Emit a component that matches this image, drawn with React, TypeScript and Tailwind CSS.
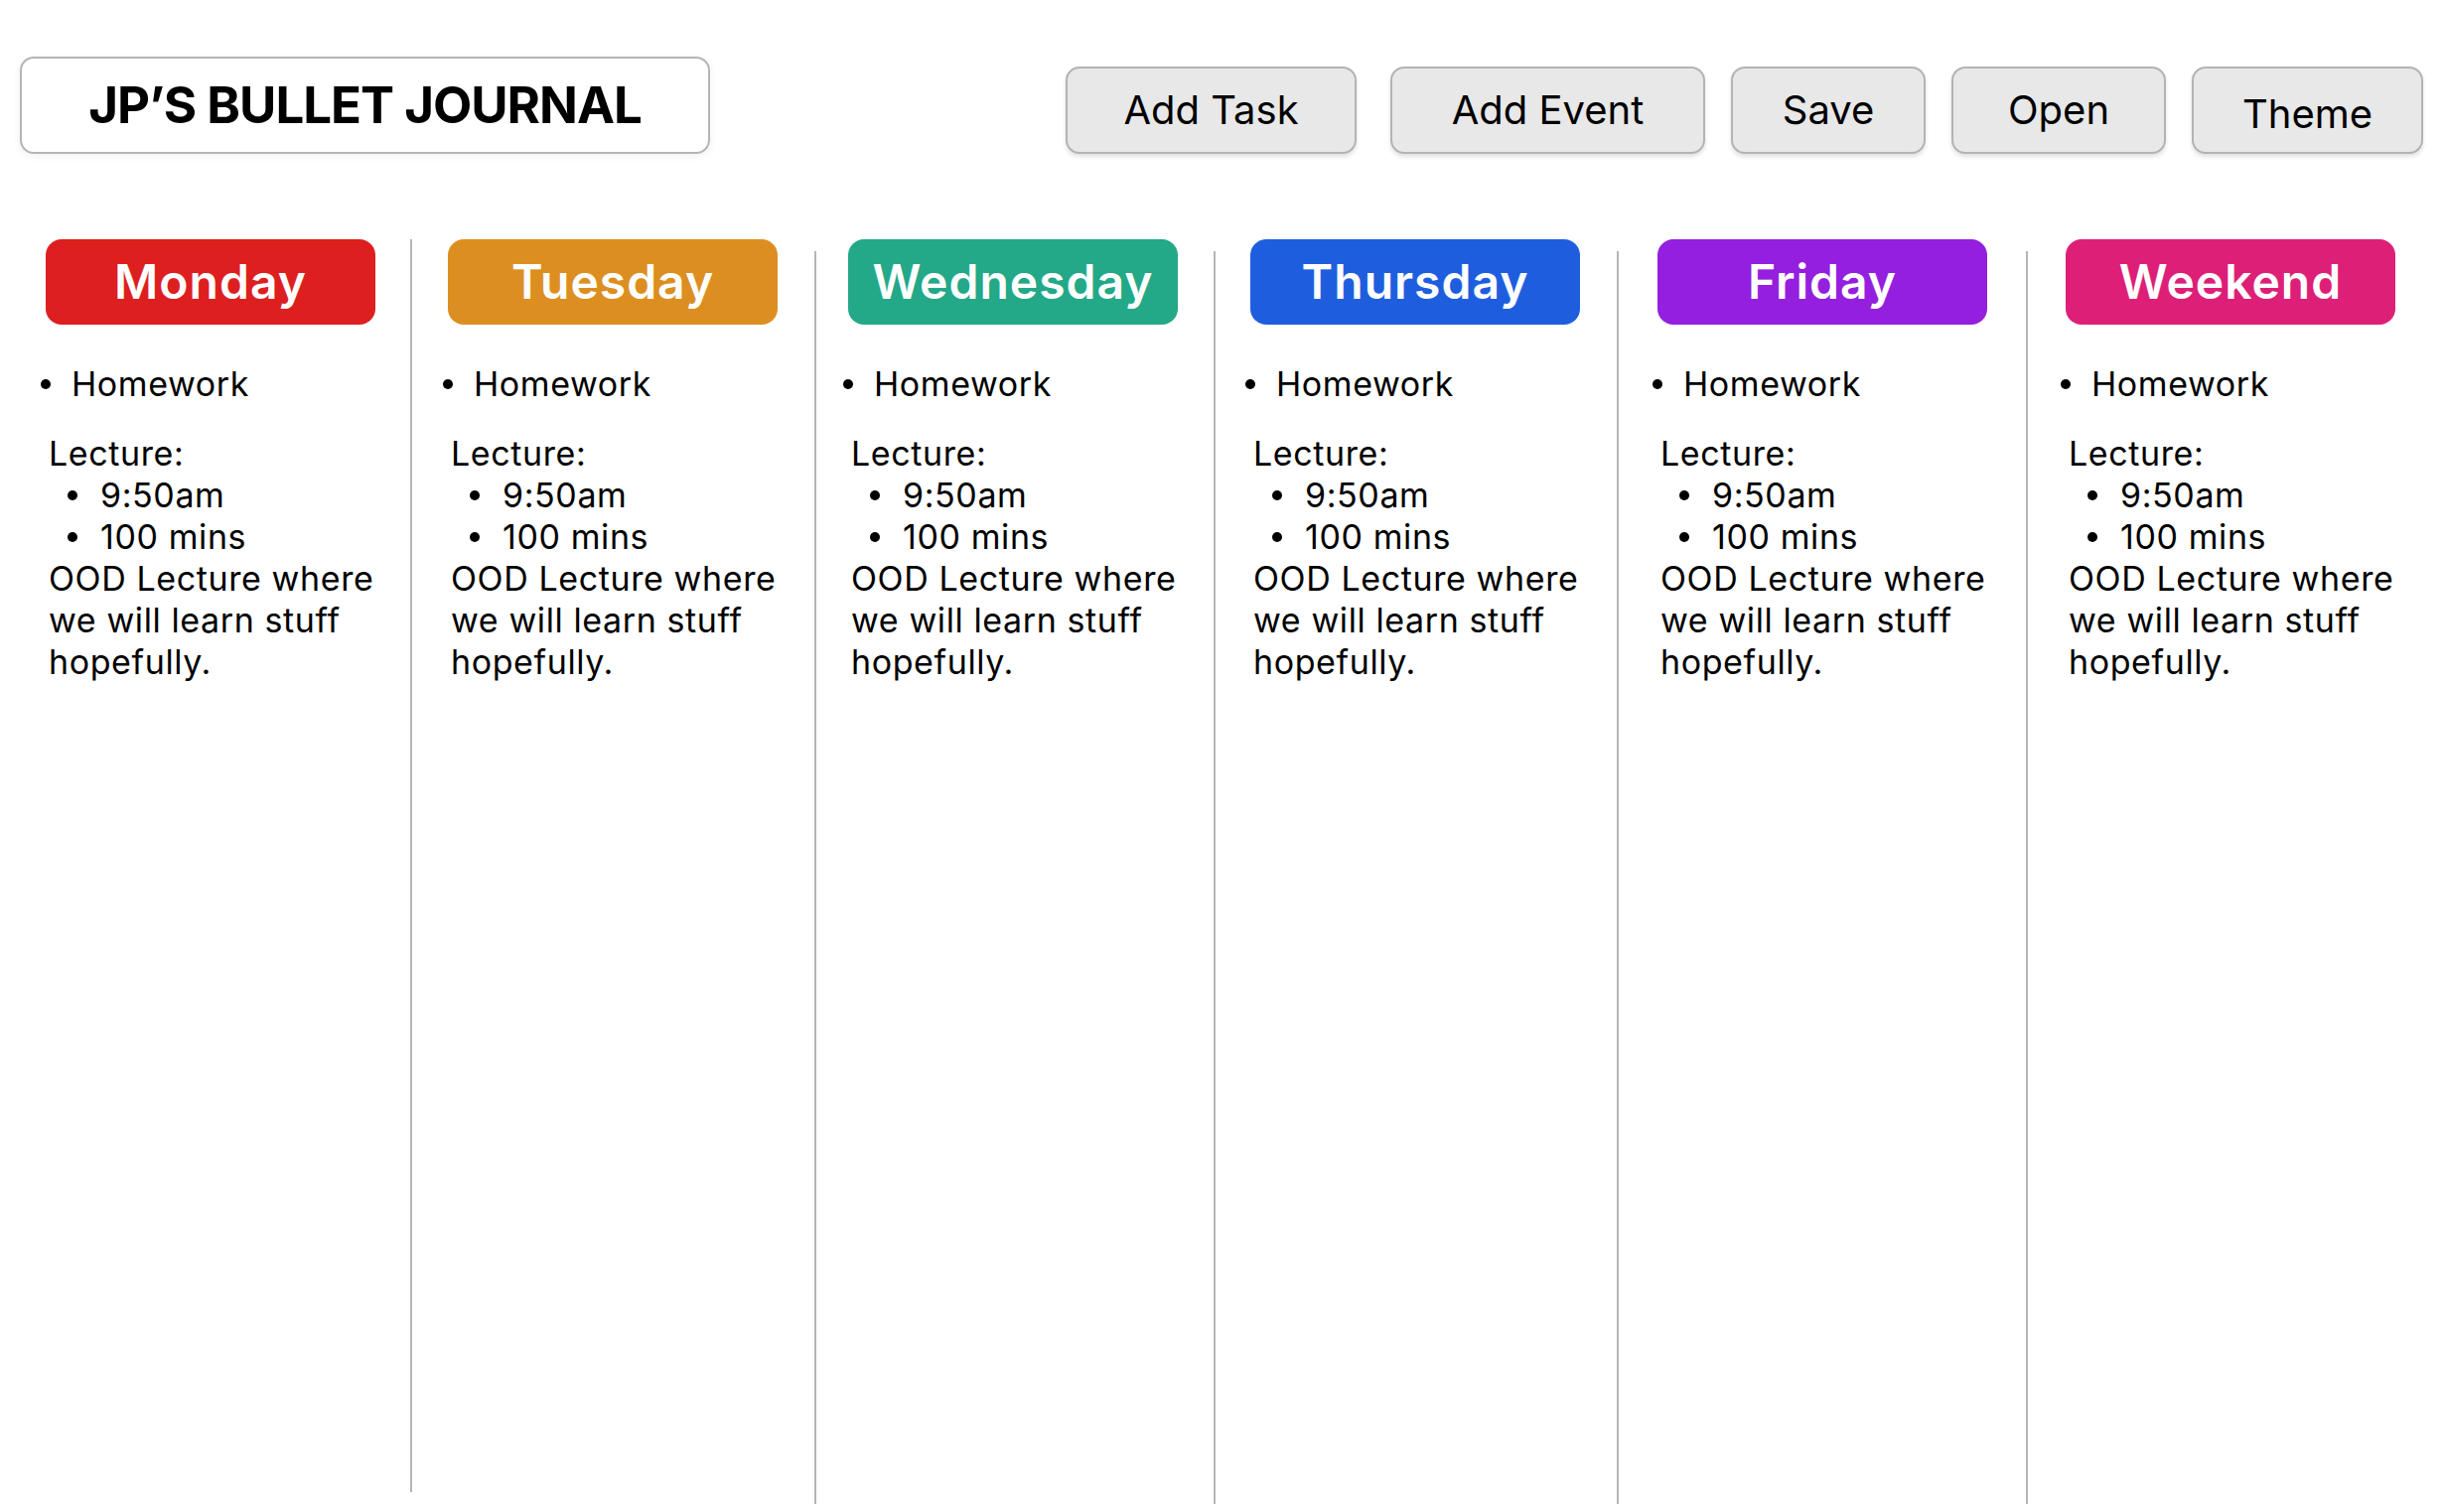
import React from 'react';

const DAYS = [
  { name: 'Monday', color: 'bg-[#dd1f1f]', spacing: '' },
  { name: 'Tuesday', color: 'bg-[#dc8f20]', spacing: 'ml-[35px] mr-[36px]' },
  { name: 'Wednesday', color: 'bg-[#23a888]', spacing: 'ml-[37px] mr-[32px] mt-[12px]' },
  { name: 'Thursday', color: 'bg-[#1e5ede]', spacing: 'ml-[36px] mr-[35px] mt-[12px]' },
  { name: 'Friday', color: 'bg-[#941fde]', spacing: 'ml-[37px] mr-[39px] mt-[12px]' },
  { name: 'Weekend', color: 'bg-[#dd1f78]', spacing: 'ml-[39px] mr-[38px] mt-[12px]' },
];

const BUTTONS = [
  { label: 'Add Task', width: 'w-[293px]', extra: '' },
  { label: 'Add Event', width: 'w-[317px] ml-[8px]', extra: '' },
  { label: 'Save', width: 'w-[196px]', extra: '' },
  { label: 'Open', width: 'w-[216px]', extra: '' },
  { label: 'Theme', width: 'w-[233px]', extra: 'pt-[8px]' },
];

function Bullet({ children, indent }: { children: React.ReactNode; indent?: boolean }) {
  return (
    <div className={`flex items-center ${indent ? 'pl-[19px]' : 'ml-[-8px]'}`}>
      <span className="w-[10px] h-[10px] rounded-full bg-black flex-shrink-0" />
      <span className={indent ? 'ml-[23px]' : 'ml-[21px]'}>{children}</span>
    </div>
  );
}

function DayColumn({ name, color }: { name: string; color: string }) {
  return (
    <div className="w-[332px] flex-shrink-0">
      <div
        className={`${color} h-[86px] rounded-[16px] flex items-center justify-center text-white text-[48px] font-semibold tracking-[1px]`}
      >
        {name}
      </div>
      <div className="mt-[39px] pl-[3px] text-[34px] leading-[42px] tracking-[0.6px] text-black">
        <Bullet>Homework</Bullet>
        <div className="mt-[28px]">
          <p>Lecture:</p>
          <Bullet indent>9:50am</Bullet>
          <Bullet indent>100 mins</Bullet>
          <p>OOD Lecture where we will learn stuff hopefully.</p>
        </div>
      </div>
    </div>
  );
}

export default function App() {
  return (
    <div className="min-h-[1523px] bg-white font-['Inter',sans-serif] text-black">
      <div className="flex items-end justify-between pt-[57px] pl-[20px] pr-[22px]">
        <div className="w-[695px] h-[98px] border-2 border-[#b5b5b5] rounded-[14px] flex items-center justify-center shadow-[0_2px_10px_rgba(0,0,0,0.06)]">
          <h1 className="text-[51px] font-bold tracking-[-1px]">JP’S BULLET JOURNAL</h1>
        </div>
        <div className="flex gap-[26px]">
          {BUTTONS.map((b) => (
            <button
              key={b.label}
              className={`${b.width} h-[88px] bg-[#e8e8e8] border-2 border-[#b3b3b3] rounded-[14px] text-[40px] flex items-center justify-center shadow-[0_3px_4px_rgba(0,0,0,0.12)] ${b.extra}`}
            >
              {b.label}
            </button>
          ))}
        </div>
      </div>

      <div className="flex pl-[46px] mt-[86px]">
        {DAYS.map((day, i) => (
          <React.Fragment key={day.name}>
            {i > 0 && (
              <div className={`w-[2px] h-[1262px] bg-[#b5b5b5] flex-shrink-0 ${day.spacing}`} />
            )}
            <DayColumn name={day.name} color={day.color} />
          </React.Fragment>
        ))}
      </div>
    </div>
  );
}
